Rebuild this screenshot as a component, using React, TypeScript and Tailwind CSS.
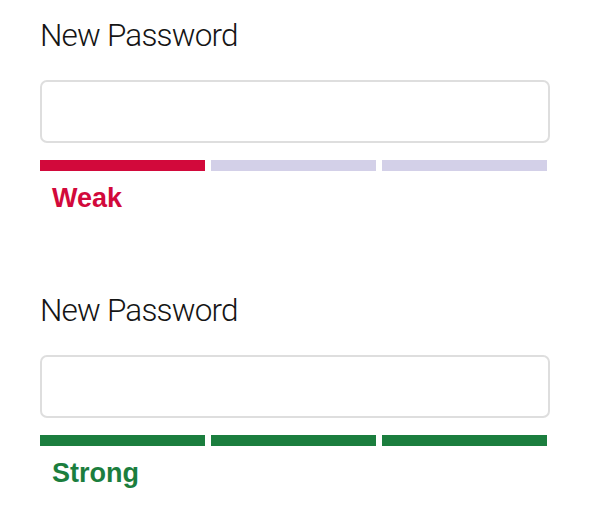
type Strength = 'weak' | 'strong';

const levels: Record<Strength, { label: string; filled: number; bar: string; text: string }> = {
  weak: { label: 'Weak', filled: 1, bar: 'bg-[#d2093b]', text: 'text-[#d2093b]' },
  strong: { label: 'Strong', filled: 3, bar: 'bg-[#1b7e3e]', text: 'text-[#1b7e3e]' },
};

function PasswordField({ strength }: { strength: Strength }) {
  const level = levels[strength];

  return (
    <div className="flex flex-col">
      <label className="mt-[1px] font-['Roboto',sans-serif] text-[31.5px] font-light leading-[38px] tracking-[-0.8px] text-[#151515]">
        New Password
      </label>
      <input
        type="password"
        className="mt-[25px] h-[63px] w-[510px] rounded-[7px] border-2 border-[#dedede] bg-white outline-none"
      />
      <div className="mt-[17px] flex w-[507px] gap-[6px]">
        {[0, 1, 2].map((i) => (
          <div
            key={i}
            className={`h-[11px] flex-1 ${i < level.filled ? level.bar : 'bg-[#d3d0e8]'}`}
          />
        ))}
      </div>
      <span
        className={`mt-[12px] pl-[12px] font-['Liberation_Sans',Arial,sans-serif] text-[27px] font-bold leading-[30px] ${level.text}`}
      >
        {level.label}
      </span>
    </div>
  );
}

export default function App() {
  return (
    <div className="flex h-[528px] w-[600px] flex-col gap-[78px] bg-white pl-[40px] pt-[16px]">
      <PasswordField strength="weak" />
      <PasswordField strength="strong" />
    </div>
  );
}
